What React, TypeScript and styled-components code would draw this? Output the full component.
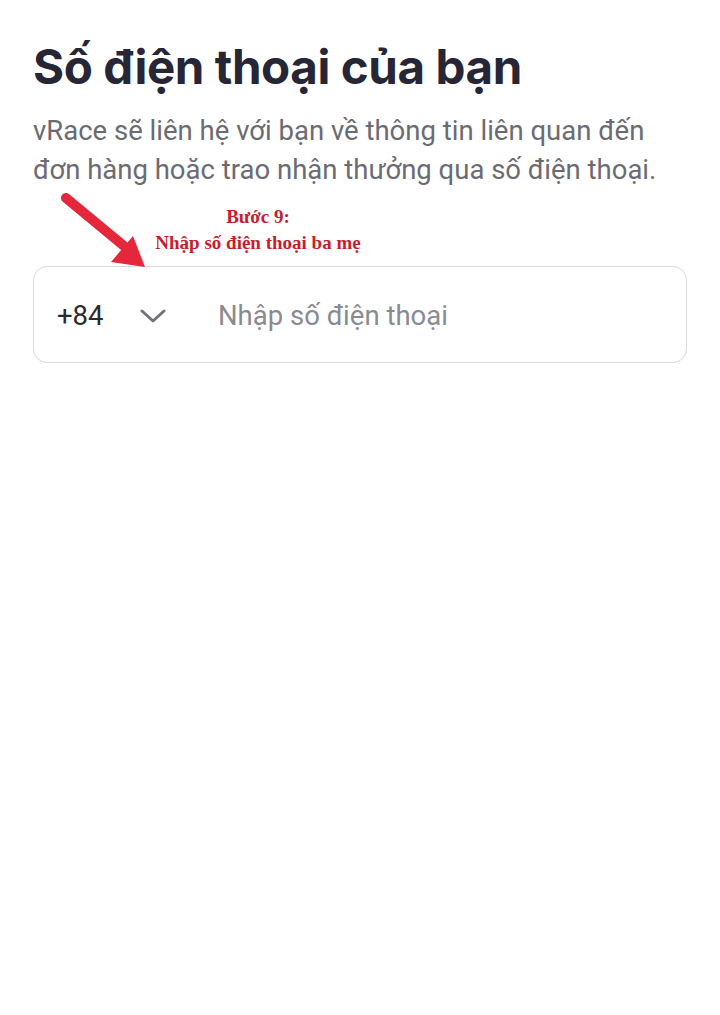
import styled, { createGlobalStyle } from "styled-components";

const GlobalStyle = createGlobalStyle`
  html, body {
    margin: 0;
    padding: 0;
    background: #ffffff;
  }
  body {
    font-family: Roboto, "Noto Sans", sans-serif;
  }
`;

const Page = styled.div`
  position: relative;
  width: 720px;
  height: 1015px;
  background: #ffffff;
  padding: 36px 33px 0 33px;
  box-sizing: border-box;
  overflow: hidden;
`;

const Title = styled.h1`
  margin: 0;
  font-family: Inter, "Noto Sans", sans-serif;
  font-weight: 700;
  font-size: 47.5px;
  line-height: 62px;
  letter-spacing: -0.4px;
  color: #272637;
`;

const Subtitle = styled.p`
  margin: 13px 0 0 0;
  font-family: Roboto, sans-serif;
  font-size: 27.5px;
  line-height: 39px;
  color: #6b6b73;
`;

const Note = styled.div`
  margin-top: 15px;
  display: flex;
  flex-direction: column;
  align-items: center;
  width: 450px;
  font-family: "Liberation Serif", serif;
  font-weight: 700;
  font-size: 19px;
  line-height: 26px;
  color: #c81d2c;
`;

const Arrow = styled.svg`
  position: absolute;
  left: 56px;
  top: 188px;
`;

const InputBox = styled.div`
  margin-top: 10px;
  height: 97px;
  border: 1.5px solid #d9d9de;
  border-radius: 14px;
  box-sizing: border-box;
  display: flex;
  align-items: center;
  padding: 2px 0 0 23px;
`;

const CountryCode = styled.div`
  display: flex;
  align-items: center;
  gap: 36px;
  font-size: 27.5px;
  color: #2b2b2b;
  width: 161px;
`;

const Placeholder = styled.span`
  font-size: 27.5px;
  color: #8a8a92;
`;

export default function App() {
  return (
    <Page>
      <GlobalStyle />
      <Title>Số điện thoại của bạn</Title>
      <Subtitle>
        vRace sẽ liên hệ với bạn về thông tin liên quan đến
        <br />
        đơn hàng hoặc trao nhận thưởng qua số điện thoại.
      </Subtitle>
      <Note>
        <span>Bước 9:</span>
        <span>Nhập số điện thoại ba mẹ</span>
      </Note>
      <InputBox>
        <CountryCode>
          <span>+84</span>
          <svg width="26" height="14" viewBox="0 0 26 14" fill="none">
            <path d="M2 2l11 10 11-10" stroke="#74747c" strokeWidth="3" strokeLinecap="round" strokeLinejoin="round" />
          </svg>
        </CountryCode>
        <Placeholder>Nhập số điện thoại</Placeholder>
      </InputBox>
      <Arrow width="110" height="90" viewBox="0 0 110 90">
        <line x1="10" y1="10" x2="68" y2="58" stroke="#e5273b" strokeWidth="10" strokeLinecap="round" />
        <polygon points="89,79 55,74 77,48" fill="#e5273b" />
      </Arrow>
    </Page>
  );
}
